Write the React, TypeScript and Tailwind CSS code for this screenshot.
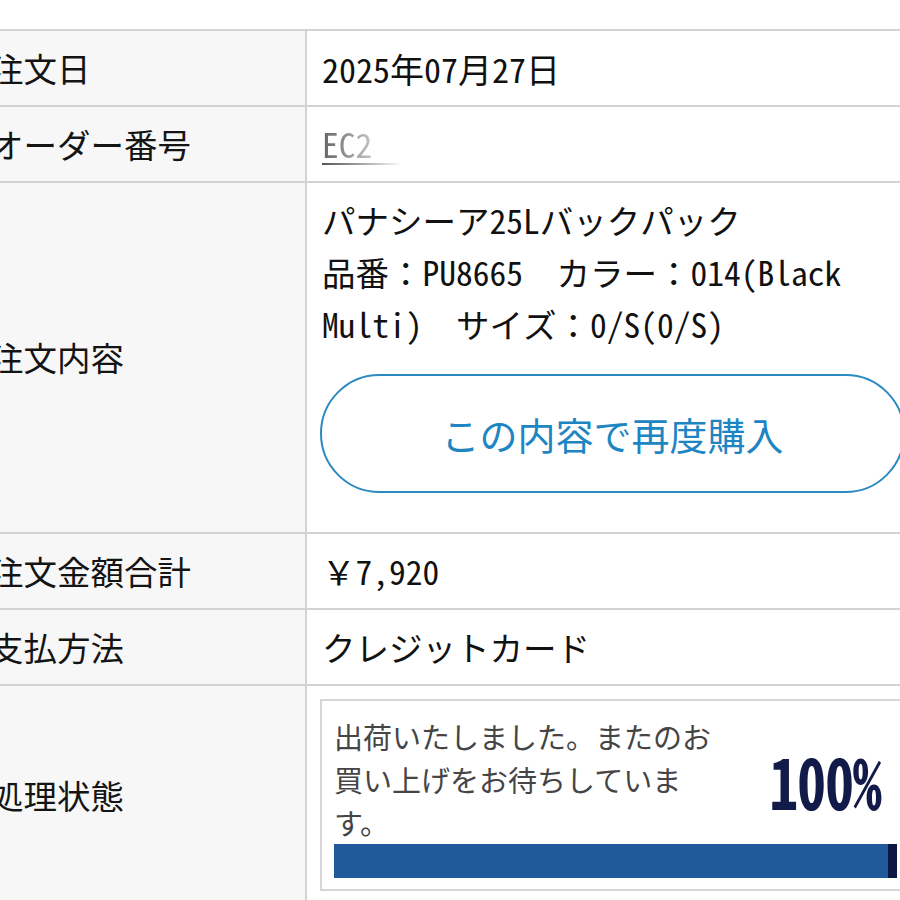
const MONO = "font-['Noto_Sans_Mono_CJK_JP','Noto_Sans_CJK_JP',sans-serif]";
const SANS = "font-['Noto_Sans_CJK_JP',sans-serif]";

function Row({ label, children, className = "h-[76px]" }: { label: string; children: React.ReactNode; className?: string }) {
  return (
    <div className={`flex border-b-2 border-[#d3d3d3] ${className}`}>
      <div className={`w-[331px] shrink-0 bg-[#f7f7f7] border-r-2 border-[#d3d3d3] flex items-center pl-[14px] text-[33.5px] text-[#141414] ${SANS}`}>
        {label}
      </div>
      <div className="flex-1 flex items-center pl-[15px] bg-white">{children}</div>
    </div>
  );
}

export default function App() {
  return (
    <div className="w-[900px] h-[900px] overflow-hidden bg-white">
      <div className="w-[936px] -ml-[24px] mt-[29px] border-t-2 border-[#d3d3d3]">
        <Row label="注文日">
          <span className={`text-[34px] text-[#111] ${MONO}`}>2025年07月27日</span>
        </Row>
        <Row label="オーダー番号">
          <span className={`relative text-[33.5px] ${MONO}`}>
            <span className="bg-gradient-to-r from-[#666] via-[#bbb] to-white bg-clip-text text-transparent pr-[40px]">EC2</span>
            <span className="absolute left-0 bottom-[4px] h-[2px] w-[80px] bg-gradient-to-r from-[#555] to-white" />
          </span>
        </Row>
        <Row label="注文内容" className="">
          <div className="flex flex-col pt-[11px] pb-[39px]">
            <div className={`text-[33.5px] leading-[52px] text-[#111] ${MONO}`}>
              パナシーア25Lバックパック
              <br />
              品番：PU8665　カラー：014(Black
              <br />
              Multi)　サイズ：0/S(0/S)
            </div>
            <button className={`mt-[24px] -ml-[2px] h-[119px] w-[585px] rounded-full border-2 border-[#2b8ac1] bg-white text-[38px] text-[#1d86c2] ${SANS}`}>
              この内容で再度購入
            </button>
          </div>
        </Row>
        <Row label="注文金額合計">
          <span className={`text-[33.5px] text-[#111] ${MONO}`}>￥7,920</span>
        </Row>
        <Row label="支払方法">
          <span className={`text-[33.5px] text-[#111] ${MONO}`}>クレジットカード</span>
        </Row>
        <Row label="処理状態" className="">
          <div className="py-[13px] -ml-[2px]">
            <div className="w-[592px] border-2 border-[#d6d6d6] pt-[14px] pb-[11px] pl-[12px] pr-[12px]">
              <div className="flex items-center">
                <div className={`w-[400px] text-[29px] leading-[43px] text-[#454545] ${SANS}`}>
                  出荷いたしました。またのお
                  <br />
                  買い上げをお待ちしていま
                  <br />
                  す。
                </div>
                <div className="flex-1 flex justify-end pr-[17px]">
                  <span className={`inline-block origin-right scale-x-[0.82] text-[70px] font-semibold leading-none tracking-[-1px] text-[#111a49] ${MONO}`}>100%</span>
                </div>
              </div>
              <div className="h-[34px] w-[563px] bg-[#215a9b] border-r-[9px] border-[#0c1744]" />
            </div>
          </div>
        </Row>
      </div>
    </div>
  );
}
